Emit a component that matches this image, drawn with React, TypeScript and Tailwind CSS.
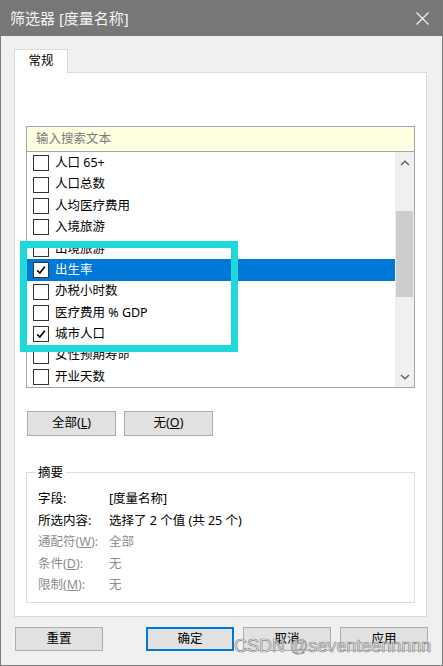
import React from "react";

const rows: { label: string; checked?: boolean; selected?: boolean }[] = [
  { label: "人口 65+" },
  { label: "人口总数" },
  { label: "人均医疗费用" },
  { label: "入境旅游" },
  { label: "出境旅游" },
  { label: "出生率", checked: true, selected: true },
  { label: "办税小时数" },
  { label: "医疗费用 % GDP" },
  { label: "城市人口", checked: true },
  { label: "女性预期寿命" },
  { label: "开业天数" },
];

function Check({ checked }: { checked?: boolean }) {
  return (
    <div className="w-[16px] h-[16px] border border-[#333333] bg-white flex items-center justify-center shrink-0">
      {checked && (
        <svg width="12" height="12" viewBox="0 0 12 12">
          <path d="M2.2 6.4 L4.8 9 L9.8 2.8" fill="none" stroke="#000" strokeWidth="1.6" />
        </svg>
      )}
    </div>
  );
}

function Btn({ children, primary }: { children: React.ReactNode; primary?: boolean }) {
  return (
    <div
      className={
        "w-[88px] h-[24px] flex items-center justify-center bg-[#e1e1e1] text-black " +
        (primary ? "border-2 border-[#0078d7]" : "border border-[#adadad]")
      }
    >
      {children}
    </div>
  );
}

export default function App() {
  return (
    <div className="w-[443px] h-[666px] relative overflow-hidden bg-[#f0f0f0] border-x border-b border-[#7a7a7a] font-['Noto_Sans','Noto_Sans_CJK_SC',sans-serif] text-[12.5px] text-black">
      {/* title bar */}
      <div className="h-[36px] bg-[#777777] flex items-center pl-[9px] pr-[13px]">
        <span className="text-[#f4f4f4] text-[15px] leading-none">筛选器 [度量名称]</span>
        <svg className="ml-auto" width="13" height="13" viewBox="0 0 13 13">
          <path d="M0.5 0.5 L12.5 12.5 M12.5 0.5 L0.5 12.5" stroke="#f0f0f0" strokeWidth="1.3" />
        </svg>
      </div>

      <div className="pt-[13px] pl-[13px]">
        {/* tab */}
        <div className="relative z-10 -mb-px w-[54px] h-[24px] bg-white border border-b-0 border-[#d9d9d9] flex items-center justify-center">
          常规
        </div>
        {/* panel */}
        <div className="w-[413px] h-[545px] bg-white border border-[#d9d9d9] pl-[11px] pt-[53px] flex flex-col">
          {/* search */}
          <div className="w-[389px] h-[26px] bg-[#ffffe1] border border-[#a5a5ad] flex items-center pl-[9px] text-[#7a7a7a]">
            输入搜索文本
          </div>
          {/* list */}
          <div className="w-[389px] h-[236px] border border-t-0 border-[#a5a5ad] flex">
            <div className="flex-1 overflow-hidden pt-[0.5px]">
              {rows.map((r) => (
                <div
                  key={r.label}
                  className={
                    "h-[21.4px] flex items-center pl-[6px] gap-[6px] " +
                    (r.selected ? "bg-[#0078d7] text-white" : "")
                  }
                >
                  <Check checked={r.checked} />
                  <span className="leading-none whitespace-nowrap">{r.label}</span>
                </div>
              ))}
            </div>
            <div className="w-[19px] bg-[#f0f0f0] flex flex-col items-center">
              <div className="h-[20px] flex items-center justify-center mt-[1px]">
                <svg width="10" height="6" viewBox="0 0 10 6">
                  <path d="M1 5 L5 1.2 L9 5" fill="none" stroke="#606060" strokeWidth="1.5" />
                </svg>
              </div>
              <div className="w-[17px] h-[86px] bg-[#cdcdcd] mt-[38px]" />
              <div className="flex-1" />
              <div className="h-[20px] flex items-center justify-center">
                <svg width="10" height="6" viewBox="0 0 10 6">
                  <path d="M1 1 L5 4.8 L9 1" fill="none" stroke="#606060" strokeWidth="1.5" />
                </svg>
              </div>
            </div>
          </div>
          {/* all / none */}
          <div className="flex gap-[8px] mt-[23px] pl-[1px]">
            <div className="w-[89px] h-[25px] flex items-center justify-center bg-[#e1e1e1] border border-[#adadad]">
              全部(<span className="underline">L</span>)
            </div>
            <div className="w-[89px] h-[25px] flex items-center justify-center bg-[#e1e1e1] border border-[#adadad]">
              无(<span className="underline">O</span>)
            </div>
          </div>
          {/* summary group */}
          <div className="relative w-[389px] h-[131px] mt-[36px] border border-[#dcdcdc] pl-[11px] pt-[16px]">
            <div className="absolute -top-[9px] left-[8px] px-[3px] bg-white leading-[18px]">摘要</div>
            <div className="flex flex-col">
              <div className="h-[21.5px] flex items-center">
                <span className="w-[71px]">字段:</span>
                <span>[度量名称]</span>
              </div>
              <div className="h-[21.5px] flex items-center">
                <span className="w-[71px]">所选内容:</span>
                <span>选择了 2 个值 (共 25 个)</span>
              </div>
              <div className="h-[21.5px] flex items-center text-[#8c8c8c]">
                <span className="w-[71px]">
                  通配符(<span className="underline">W</span>):
                </span>
                <span>全部</span>
              </div>
              <div className="h-[21.5px] flex items-center text-[#8c8c8c]">
                <span className="w-[71px]">
                  条件(<span className="underline">D</span>):
                </span>
                <span>无</span>
              </div>
              <div className="h-[21.5px] flex items-center text-[#8c8c8c]">
                <span className="w-[71px]">
                  限制(<span className="underline">M</span>):
                </span>
                <span>无</span>
              </div>
            </div>
          </div>
        </div>
        {/* bottom buttons */}
        <div className="flex mt-[10px] pl-[1px]">
          <Btn>重置</Btn>
          <div className="ml-[43px] flex gap-[9px]">
            <Btn primary>确定</Btn>
            <Btn>取消</Btn>
            <Btn>应用</Btn>
          </div>
        </div>
      </div>

      {/* annotation rectangle */}
      <div className="absolute left-[19px] top-[241px] w-[218px] h-[111px] border-[7px] border-[#1ed9d9] pointer-events-none" />

      {/* watermark */}
      <div className="absolute left-[233px] top-[637px] font-['Liberation_Sans',sans-serif] text-[18px] leading-none text-[#f2f2f2] [-webkit-text-stroke:0.7px_#8a8a8a] whitespace-nowrap pointer-events-none">
        CSDN @seventeennnnn
      </div>
    </div>
  );
}
